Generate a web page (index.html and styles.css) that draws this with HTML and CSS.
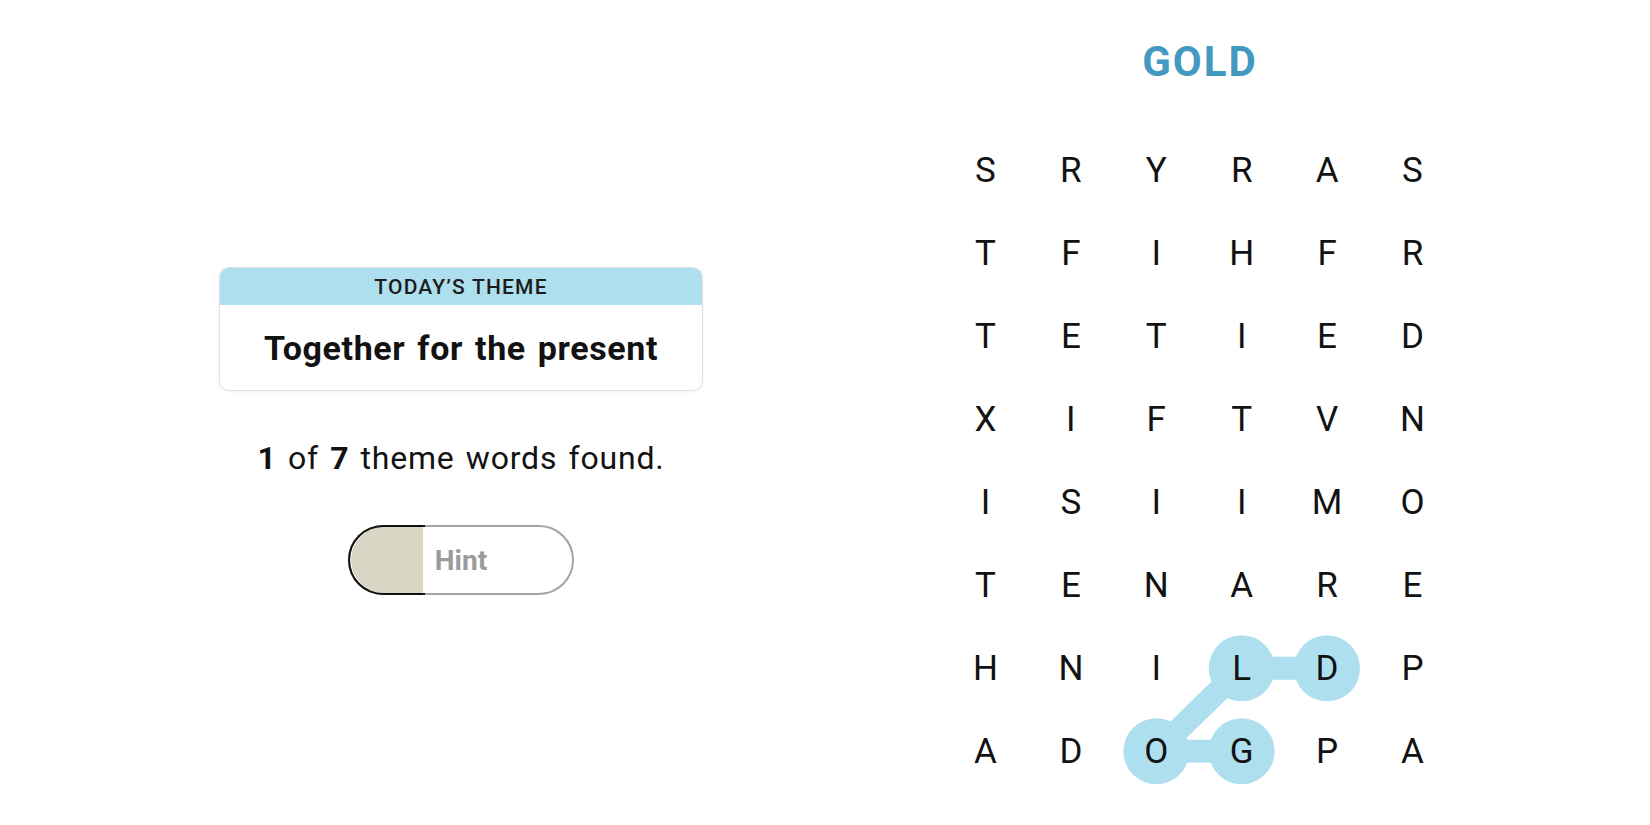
FILE: index.html
```html
<!DOCTYPE html>
<html lang="en">
<head>
<meta charset="utf-8">
<title>Strands</title>
<link rel="stylesheet" href="styles.css">
</head>
<body>
<main class="game">
  <section class="side">
    <div class="theme-card">
      <div class="theme-head">TODAY’S THEME</div>
      <div class="theme-body">Together for the present</div>
    </div>
    <p class="progress"><b>1</b> of <b>7</b> theme words found.</p>
    <button class="hint" type="button">
      <span class="hint-fill"></span>
      <span class="hint-edge"></span>
      <span class="hint-label">Hint</span>
    </button>
  </section>
  <section class="board">
    <h1 class="word">GOLD</h1>
    <div class="grid">
      <svg class="links" width="512" height="664" viewBox="0 0 512.4 664" aria-hidden="true">
        <g stroke="#aedfee" stroke-width="23" stroke-linecap="round" fill="none">
          <line x1="298.9" y1="622.5" x2="213.5" y2="622.5"/>
          <line x1="213.5" y1="622.5" x2="298.9" y2="539.5"/>
          <line x1="298.9" y1="539.5" x2="384.3" y2="539.5"/>
        </g>
        <g fill="#aedfee">
          <circle cx="298.9" cy="539.5" r="33"/>
          <circle cx="384.3" cy="539.5" r="33"/>
          <circle cx="213.5" cy="622.5" r="33"/>
          <circle cx="298.9" cy="622.5" r="33"/>
        </g>
      </svg>
      <span class="cell">S</span><span class="cell">R</span><span class="cell">Y</span><span class="cell">R</span><span class="cell">A</span><span class="cell">S</span>
      <span class="cell">T</span><span class="cell">F</span><span class="cell">I</span><span class="cell">H</span><span class="cell">F</span><span class="cell">R</span>
      <span class="cell">T</span><span class="cell">E</span><span class="cell">T</span><span class="cell">I</span><span class="cell">E</span><span class="cell">D</span>
      <span class="cell">X</span><span class="cell">I</span><span class="cell">F</span><span class="cell">T</span><span class="cell">V</span><span class="cell">N</span>
      <span class="cell">I</span><span class="cell">S</span><span class="cell">I</span><span class="cell">I</span><span class="cell">M</span><span class="cell">O</span>
      <span class="cell">T</span><span class="cell">E</span><span class="cell">N</span><span class="cell">A</span><span class="cell">R</span><span class="cell">E</span>
      <span class="cell">H</span><span class="cell">N</span><span class="cell">I</span><span class="cell">L</span><span class="cell">D</span><span class="cell">P</span>
      <span class="cell">A</span><span class="cell">D</span><span class="cell">O</span><span class="cell">G</span><span class="cell">P</span><span class="cell">A</span>
    </div>
  </section>
</main>
</body>
</html>
```
FILE: styles.css
```css
html, body {
  margin: 0;
  padding: 0;
  background: #ffffff;
}

body {
  font-family: Roboto, "Liberation Sans", sans-serif;
  color: #121212;
  width: 1650px;
  height: 825px;
  overflow: hidden;
}

.game {
  display: flex;
  align-items: flex-start;
}

.side {
  width: 922px;
  display: flex;
  flex-direction: column;
  align-items: center;
  padding-top: 267px;
}

.theme-card {
  width: 484px;
  box-sizing: border-box;
  border: 1px solid #e2e2e2;
  border-radius: 10px;
  overflow: hidden;
  box-shadow: 0 1px 3px rgba(0, 0, 0, 0.06);
}

.theme-head {
  height: 36px;
  background: #aedfee;
  display: flex;
  align-items: center;
  justify-content: center;
  padding-top: 1px;
  font-size: 21px;
  font-weight: 500;
  letter-spacing: 1.2px;
  color: #1c1c1c;
}

.theme-body {
  height: 85px;
  display: flex;
  align-items: center;
  justify-content: center;
  font-size: 34px;
  font-weight: 700;
  letter-spacing: 0.6px;
  word-spacing: 3px;
  color: #121212;
}

.progress {
  margin: 47px 0 0;
  height: 40px;
  line-height: 40px;
  font-size: 32px;
  font-weight: 400;
  letter-spacing: 0.8px;
  word-spacing: 2.5px;
  color: #121212;
}

.progress b {
  font-weight: 700;
}

.hint {
  position: relative;
  margin-top: 47px;
  width: 226px;
  height: 70px;
  box-sizing: border-box;
  border: 2px solid #a3a3a3;
  border-radius: 35px;
  background: #ffffff;
  padding: 0;
  font-family: inherit;
  cursor: pointer;
}

.hint-fill {
  position: absolute;
  left: 1px;
  top: 0;
  bottom: 0;
  width: 72px;
  background: #d9d7c3;
  border-radius: 33px 0 0 33px;
}

.hint-edge {
  position: absolute;
  left: -2px;
  top: -2px;
  bottom: -2px;
  width: 75px;
  border: 2px solid #121212;
  border-right: 0;
  border-radius: 35px 0 0 35px;
}

.hint-label {
  position: relative;
  font-size: 28px;
  font-weight: 700;
  color: #9b9b9b;
}

.board {
  width: 554px;
  display: flex;
  flex-direction: column;
  align-items: center;
  padding-top: 37px;
}

.word {
  margin: 0;
  height: 50px;
  line-height: 50px;
  font-size: 42px;
  font-weight: 700;
  color: #4399c1;
  letter-spacing: 2px;
  padding-left: 2px;
}

.grid {
  position: relative;
  margin-top: 42px;
  width: 512.4px;
  display: grid;
  grid-template-columns: repeat(6, 85.4px);
  grid-auto-rows: 83px;
}

.links {
  position: absolute;
  left: 0;
  top: 0;
}

.cell {
  position: relative;
  display: flex;
  align-items: center;
  justify-content: center;
  font-size: 35px;
  font-weight: 400;
  color: #121212;
}
```
